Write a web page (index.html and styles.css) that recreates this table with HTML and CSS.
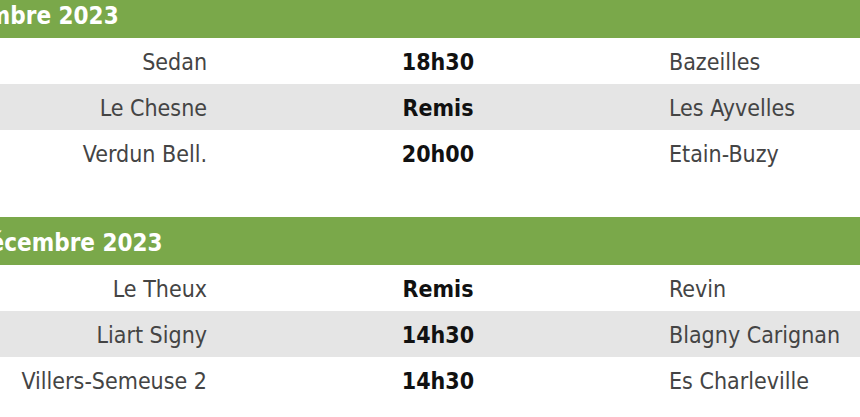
FILE: index.html
```html
<!DOCTYPE html>
<html lang="fr">
<head>
<meta charset="utf-8">
<title>Calendrier</title>
<link rel="stylesheet" href="styles.css">
</head>
<body>
<div class="page">
  <section class="day day-first">
    <h2 class="day-title">Samedi 4 Novembre 2023</h2>
    <div class="match">
      <div class="home">Sedan</div><div class="score">18h30</div><div class="away">Bazeilles</div>
    </div>
    <div class="match alt">
      <div class="home">Le Chesne</div><div class="score">Remis</div><div class="away">Les Ayvelles</div>
    </div>
    <div class="match">
      <div class="home">Verdun Bell.</div><div class="score">20h00</div><div class="away">Etain-Buzy</div>
    </div>
  </section>
  <section class="day">
    <h2 class="day-title">Dimanche 10 Décembre 2023</h2>
    <div class="match">
      <div class="home">Le Theux</div><div class="score">Remis</div><div class="away">Revin</div>
    </div>
    <div class="match alt">
      <div class="home">Liart Signy</div><div class="score">14h30</div><div class="away">Blagny Carignan</div>
    </div>
    <div class="match">
      <div class="home">Villers-Semeuse 2</div><div class="score">14h30</div><div class="away">Es Charleville</div>
    </div>
  </section>
</div>
</body>
</html>
```
FILE: styles.css
```css
html, body {
  margin: 0;
  padding: 0;
  background: #ffffff;
  overflow: hidden;
}
.page {
  width: 1338px;
  margin-left: -231px;
  font-family: "DejaVu Sans Condensed", "DejaVu Sans", sans-serif;
  font-stretch: condensed;
  display: flex;
  flex-direction: column;
  gap: 41px;
}
.day-first {
  margin-top: -10px;
}
.day-title {
  box-sizing: border-box;
  margin: 0;
  height: 48px;
  padding-top: 4px;
  line-height: 44px;
  background: #7aa84a;
  color: #ffffff;
  font-size: 24px;
  font-weight: 700;
  padding-left: 37px;
  white-space: nowrap;
}
.match {
  display: grid;
  grid-template-columns: 1fr 1fr 1fr;
  height: 46px;
  line-height: 46px;
  font-size: 23px;
  color: #444444;
}
.match.alt {
  background: #e5e5e5;
}
.home, .score, .away {
  padding: 1px 8px 0;
  white-space: nowrap;
}
.home { text-align: right; }
.score { text-align: center; font-weight: 700; color: #111111; }
.away { text-align: left; }
```
